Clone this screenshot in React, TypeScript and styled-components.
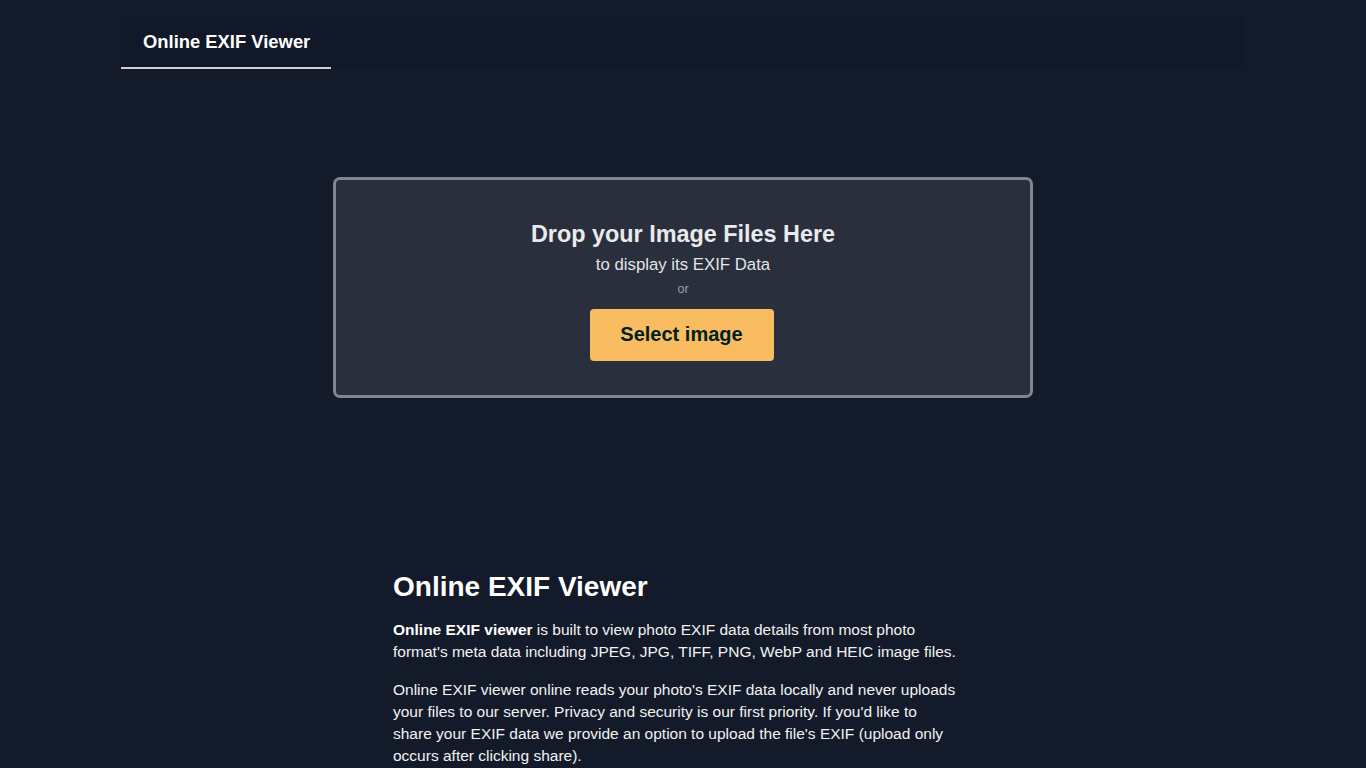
import React from "react";
import styled, { createGlobalStyle } from "styled-components";

const GlobalStyle = createGlobalStyle`
  html, body {
    margin: 0;
    padding: 0;
    background: #131a29;
    font-family: "Liberation Sans", Arial, sans-serif;
    color: #fffffe;
  }
`;

const Page = styled.div`
  min-height: 768px;
  padding-top: 16px;
`;

const Header = styled.nav`
  width: 1124px;
  height: 53px;
  margin: 0 auto;
  background: #111827;
  display: flex;
  align-items: stretch;
`;

const Tab = styled.a<{ $active?: boolean }>`
  display: flex;
  align-items: center;
  padding: 1px 21px 0 22px;
  font-size: 18.4px;
  font-weight: bold;
  color: #fffffe;
  text-decoration: none;
  border-bottom: 2px solid ${(p) => (p.$active ? "#cfd0d2" : "transparent")};
`;

const DropZone = styled.div`
  box-sizing: border-box;
  width: 700px;
  height: 221px;
  margin: 108px auto 0;
  background: #292f3c;
  border: 3px solid #80858f;
  border-radius: 7px;
  display: flex;
  flex-direction: column;
  align-items: center;
  justify-content: center;
  padding-top: 6px;
`;

const DropTitle = styled.h2`
  margin: 0;
  font-size: 23.4px;
  line-height: 26px;
  font-weight: bold;
  color: #e9eaec;
`;

const DropSub = styled.p`
  margin: 8px 0 0;
  font-size: 16.8px;
  line-height: 20px;
  color: #e3e4e6;
`;

const Or = styled.span`
  margin-top: 6px;
  font-size: 12.5px;
  line-height: 16px;
  color: #9a9ea6;
`;

const SelectButton = styled.button`
  margin: 12px 3px 0 0;
  width: 184px;
  height: 52px;
  border: none;
  border-radius: 4px;
  background: #f9bc60;
  color: #001e1d;
  font-family: inherit;
  font-size: 20px;
  font-weight: bold;
  cursor: pointer;
`;

const About = styled.section`
  width: 580px;
  margin: 172px auto 0;
`;

const Heading = styled.h1`
  margin: 0;
  font-size: 28px;
  line-height: 34px;
  font-weight: bold;
`;

const Text = styled.p`
  width: 564px;
  margin: 15px 0 0;
  font-size: 15.5px;
  line-height: 22px;
  color: #f1f2f3;

  & + & {
    margin-top: 16px;
  }

  strong {
    color: #fffffe;
  }
`;

const App = () => {
  return (
    <Page>
      <GlobalStyle />
      <Header>
        <Tab href="#" $active>
          Online EXIF Viewer
        </Tab>
      </Header>

      <DropZone>
        <DropTitle>Drop your Image Files Here</DropTitle>
        <DropSub>to display its EXIF Data</DropSub>
        <Or>or</Or>
        <SelectButton>Select image</SelectButton>
      </DropZone>

      <About>
        <Heading>Online EXIF Viewer</Heading>
        <Text>
          <strong>Online EXIF viewer</strong> is built to view photo EXIF data
          details from most photo format's meta data including JPEG, JPG, TIFF,
          PNG, WebP and HEIC image files.
        </Text>
        <Text>
          Online EXIF viewer online reads your photo's EXIF data locally and
          never uploads your files to our server. Privacy and security is our
          first priority. If you'd like to share your EXIF data we provide an
          option to upload the file's EXIF (upload only occurs after clicking
          share).
        </Text>
      </About>
    </Page>
  );
};

export default App;
